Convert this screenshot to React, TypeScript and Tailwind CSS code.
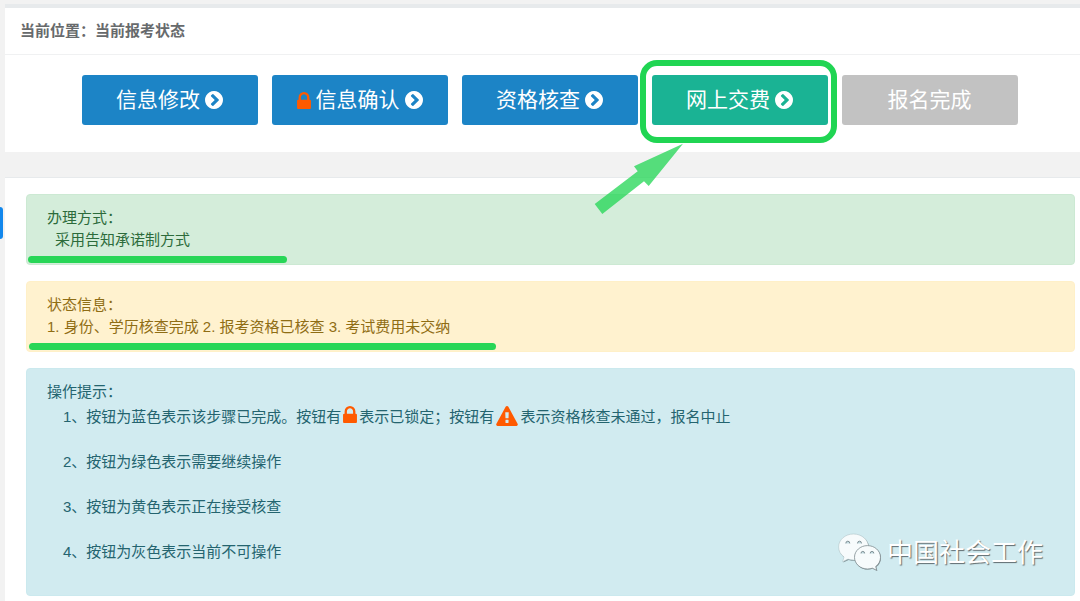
import type { ReactNode } from 'react';

function ChevronCircle() {
  return (
    <svg viewBox="128 128 1536 1536" className="h-[18px] w-[18px] shrink-0" fill="currentColor" aria-hidden="true">
      <path d="M845 1395l454-454q19-19 19-45t-19-45l-454-454q-19-19-45-19t-45 19l-102 102q-19 19-19 45t19 45l307 307-307 307q-19 19-19 45t19 45l102 102q19 19 45 19t45-19zm819-499q0 209-103 385.5t-279.5 279.5-385.5 103-385.5-103-279.5-279.5-103-385.5 103-385.5 279.5-279.5 385.5-103 385.5 103 279.5 279.5 103 385.5z" />
    </svg>
  );
}

function Lock() {
  return (
    <svg viewBox="320 128 1152 1408" className="h-[17px] w-[14px] shrink-0 text-[#ff5a00]" fill="currentColor" aria-hidden="true">
      <path d="M640 768h512v-192q0-106-75-181t-181-75-181 75-75 181v192zm832 96v576q0 40-28 68t-68 28h-960q-40 0-68-28t-28-68v-576q0-40 28-68t68-28h32v-192q0-184 132-316t316-132 316 132 132 316v192h32q40 0 68 28t28 68z" />
    </svg>
  );
}

function Warning() {
  return (
    <svg viewBox="0 0 1792 1664" className="h-5 w-[22px] shrink-0 text-[#ff5a00]" fill="currentColor" aria-hidden="true">
      <path d="M1024 1375v-190q0-14-9.5-23.5t-22.5-9.5h-192q-13 0-22.5 9.5t-9.5 23.5v190q0 14 9.5 23.5t22.5 9.5h192q13 0 22.5-9.5t9.5-23.5zm-2-374l18-459q0-12-10-19-13-11-24-11h-220q-11 0-24 11-10 7-10 21l17 457q0 10 10 16.5t24 6.5h185q14 0 23.5-6.5t10.500-16.5zm-14-934l768 1408q35 63-2 126-17 29-46.5 46t-63.5 17h-1536q-34 0-63.5-17t-46.5-46q-37-63-2-126l768-1408q17-31 47-49t65-18 65 18 47 49z" />
    </svg>
  );
}

function WeChat() {
  return (
    <svg viewBox="0 0 49 40" className="h-10 w-[49px]" aria-hidden="true">
      <path
        d="M15.500 1C7.200 1 .6 6.800.6 14c0 4.100 2.100 7.600 5.400 10L4.600 28.800l5.400-2.700c1.700.6 3.600.9 5.500.9 8.300 0 15-5.800 15-13s-6.700-13-15-13z"
        transform="translate(.7 .8)"
        fill="#84979b"
      />
      <path
        d="M15.500 1C7.200 1 .6 6.800.6 14c0 4.100 2.100 7.600 5.400 10L4.600 28.800l5.400-2.700c1.700.6 3.600.9 5.500.9 8.300 0 15-5.800 15-13s-6.700-13-15-13z"
        fill="#f7fbfc"
        stroke="#a9bcc0"
        strokeWidth=".5"
      />
      <path
        d="M29.500 12.600c-7.200 0-13 5.200-13 11.700S22.300 36 29.500 36c1.700 0 3.400-.3 4.900-.8l4.400 2.200-1.100-3.900c2.900-2.100 4.800-5.500 4.800-9.200 0-6.500-5.800-11.700-13-11.700z"
        transform="translate(.5 .6)"
        fill="#7f8d91"
      />
      <path
        d="M29.500 12.600c-7.200 0-13 5.200-13 11.700S22.300 36 29.500 36c1.700 0 3.400-.3 4.900-.8l4.400 2.200-1.100-3.900c2.900-2.100 4.800-5.500 4.800-9.200 0-6.500-5.800-11.700-13-11.700z"
        fill="#f7fbfc"
        stroke="#7f8d91"
        strokeWidth=".8"
      />
      <g fill="#c3dce1" stroke="#75858a" strokeWidth=".9">
        <path d="M7.800 10.400a2 2.200 0 0 1 4 0" />
        <path d="M19.500 10.400a2 2.200 0 0 1 4 0" />
        <path d="M23 20.400a1.800 2 0 0 1 3.600 0" />
        <path d="M32.200 20.400a1.800 2 0 0 1 3.600 0" />
      </g>
    </svg>
  );
}

function Step({ className, disabled, children }: { className: string; disabled?: boolean; children: ReactNode }) {
  return (
    <button
      type="button"
      disabled={disabled}
      className={`flex h-[50px] w-[176px] items-center justify-center gap-[5px] rounded-[3px] pr-px text-[21px] leading-[30px] text-white ${className}`}
    >
      {children}
    </button>
  );
}

function Alert({ className, children }: { className: string; children: ReactNode }) {
  return (
    <section className={`relative rounded-[4px] border px-5 pt-3 pb-[13px] ${className}`}>{children}</section>
  );
}

export default function App() {
  return (
    <div className="relative flex min-h-screen flex-col bg-[#f2f2f2] pt-1 pl-[5px] font-['Liberation_Sans','Noto_Sans_CJK_SC',sans-serif] text-[15px] leading-[22px]">
      <div className="absolute top-[207px] left-0 h-8 w-[3px] rounded-r-[3px] bg-[#1287ec]" />

      <header className="border-t-4 border-[#e7eaec] bg-white">
        <h1 className="border-b border-[#f0f1f2] px-[15px] py-3 font-bold text-[#676a6c]">当前位置：当前报考状态</h1>
        <nav className="flex gap-[14px] pt-[20px] pb-[27px] pl-[77px]">
          <Step className="bg-[#1c84c6]">
            信息修改
            <ChevronCircle />
          </Step>
          <Step className="bg-[#1c84c6]">
            <Lock />
            信息确认
            <ChevronCircle />
          </Step>
          <Step className="bg-[#1c84c6]">
            资格核查
            <ChevronCircle />
          </Step>
          <div className="relative">
            <Step className="bg-[#1ab394]">
              网上交费
              <ChevronCircle />
            </Step>
            <div className="pointer-events-none absolute -top-[15px] -right-[9px] -bottom-[18px] -left-3 rounded-[17px] border-[6px] border-[#20d553]" />
            <svg viewBox="0 0 90 72" className="pointer-events-none absolute top-[68px] -left-[58px] z-10 h-[72px] w-[90px]" aria-hidden="true">
              <path d="M89 .7 40 23.300l3.700 5L.7 61l7.600 10L50 38.300l4.700 4.700z" fill="#20d553" fillOpacity=".75" />
            </svg>
          </div>
          <Step className="bg-[#c2c2c2]" disabled>
            报名完成
          </Step>
        </nav>
      </header>

      <main className="mt-[25px] flex flex-1 flex-col gap-4 border-t border-[#e7eaec] bg-white pt-4 pr-[5px] pb-[5px] pl-[21px]">
        <Alert className="border-[#cce9d3] bg-[#d4edda] text-[#2c6b3b]">
          <h2>办理方式：</h2>
          <p className="pl-2">采用告知承诺制方式</p>
          <div className="absolute bottom-px left-px h-[7px] w-[259px] rounded-full bg-[#28d657]" />
        </Alert>

        <Alert className="border-[#fff0c8] bg-[#fff2cf] text-[#8f6d14]">
          <h2>状态信息：</h2>
          <p>1. 身份、学历核查完成 2. 报考资格已核查 3. 考试费用未交纳</p>
          <div className="absolute bottom-px left-0.5 h-[7px] w-[467px] rounded-full bg-[#28d657]" />
        </Alert>

        <Alert className="min-h-[228px] border-[#cbe9ee] bg-[#d1ebf0] text-[#24646f]">
          <h2>操作提示：</h2>
          <ul className="flex flex-col gap-[23px] pt-[3px] pl-4">
            <li className="flex items-center whitespace-nowrap">
              1、按钮为蓝色表示该步骤已完成。按钮有
              <span className="mx-0.5 flex pb-[5px]">
                <Lock />
              </span>
              表示已锁定；按钮有
              <span className="mx-0.5 flex pb-0.5">
                <Warning />
              </span>
              表示资格核查未通过，报名中止
            </li>
            <li>2、按钮为绿色表示需要继续操作</li>
            <li>3、按钮为黄色表示正在接受核查</li>
            <li>4、按钮为灰色表示当前不可操作</li>
          </ul>
          <div className="absolute right-[31px] bottom-[22px] flex items-center text-[26px] leading-10 text-white [text-shadow:1px_1px_1px_#5f6b6f]">
            <WeChat />
            中国社会工作
          </div>
        </Alert>
      </main>
    </div>
  );
}
